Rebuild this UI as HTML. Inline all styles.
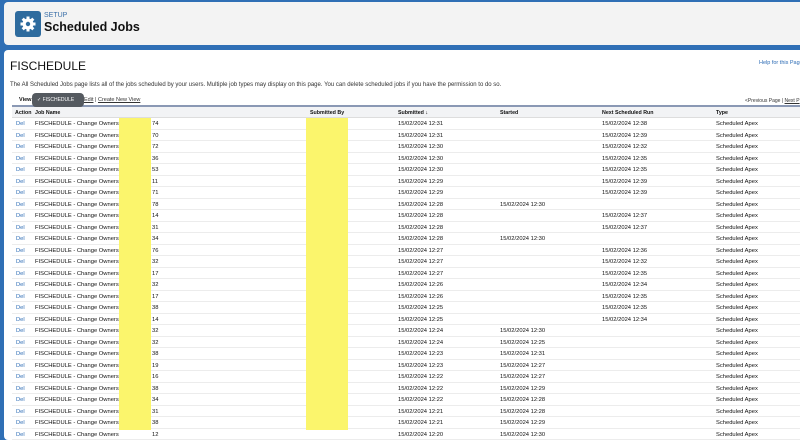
<!DOCTYPE html>
<html><head><meta charset="utf-8"><style>
*{margin:0;padding:0;box-sizing:border-box}
body{width:800px;height:430px;overflow:hidden;background:#2f6fb5;font-family:"Liberation Sans",Arial,sans-serif;position:relative}
.hdr{position:absolute;left:4px;top:2px;width:800px;height:43px;background:#f3f3f3;border-radius:4px}
.icon{position:absolute;left:11px;top:9px;width:26px;height:26px;background:#2e6b9e;border-radius:3px}
.setup{position:absolute;left:40px;top:10px;font-size:7px;color:#3a6fa8}
.title{position:absolute;left:40px;top:18px;font-size:12.5px;font-weight:bold;color:#111}
.card{position:absolute;left:4px;top:50px;width:800px;height:390px;background:#fff;border-radius:4px}
.t{position:absolute;white-space:nowrap;font-size:5.8px;color:#111}
.a{color:#2d6cb5}
.row{position:absolute;left:12px;width:790px;height:11.5px;border-bottom:1px solid #ececec}
.y{position:absolute;background:#fbf56c}
</style></head><body>
<div class="hdr">
<div class="icon"><svg width="26" height="26" viewBox="0 0 26 26"><g fill="#fff"><circle cx="13" cy="13" r="5.5"/><g stroke="#fff" stroke-width="3"><line x1="13" y1="5.5" x2="13" y2="20.5"/><line x1="5.5" y1="13" x2="20.5" y2="13"/><line x1="7.7" y1="7.7" x2="18.3" y2="18.3"/><line x1="18.3" y1="7.7" x2="7.7" y2="18.3"/></g></g><circle cx="13" cy="13" r="2.2" fill="#2e6b9e"/></svg></div>
<div class="setup">SETUP</div>
<div class="title">Scheduled Jobs</div>
</div>
<div class="card"></div>
<div class="t" style="left:10px;top:59px;font-size:12px">FISCHEDULE</div>
<div class="t a" style="left:759px;top:60px;font-size:5.5px">Help for this Page</div>
<div class="t" style="left:10px;top:82px;font-size:6px;color:#333">The All Scheduled Jobs page lists all of the jobs scheduled by your users. Multiple job types may display on this page. You can delete scheduled jobs if you have the permission to do so.</div>
<div class="t" style="left:19px;top:97px;font-size:5.5px;font-weight:bold">View:</div>
<div class="t" style="left:84px;top:97px;font-size:5.5px;color:#333"><u>Edit</u> | <u>Create New View</u></div>
<div class="t" style="left:745px;top:98px;font-size:5px;color:#333">&lt;Previous Page | <u>Next P</u></div>
<div style="position:absolute;left:12px;top:105px;width:800px;height:2px;background:#8a98b4"></div>
<div style="position:absolute;left:12px;top:107px;width:800px;height:11px;background:#f2f3f5;border-bottom:1px solid #ddd"></div>
<div class="t" style="left:15px;top:110px;font-size:5.3px;font-weight:bold">Action</div>
<div class="t" style="left:35px;top:110px;font-size:5.3px;font-weight:bold">Job Name</div>
<div class="t" style="left:310px;top:110px;font-size:5.3px;font-weight:bold">Submitted By</div>
<div class="t" style="left:398px;top:110px;font-size:5.3px;font-weight:bold">Submitted ↓</div>
<div class="t" style="left:500px;top:110px;font-size:5.3px;font-weight:bold">Started</div>
<div class="t" style="left:602px;top:110px;font-size:5.3px;font-weight:bold">Next Scheduled Run</div>
<div class="t" style="left:716px;top:110px;font-size:5.3px;font-weight:bold">Type</div>
<div id="rows"></div>
<div class="y" style="left:119px;top:118px;width:32px;height:312px"></div>
<div class="y" style="left:306px;top:118px;width:42px;height:312px"></div>
<div style="position:absolute;left:32px;top:93px;width:52px;height:14px;background:#555a60;border-radius:4px;color:#fff;font-size:5px;padding:4px 0 0 5px">✓ FISCHEDULE</div>
<script>
var d=[["74","12:31","","12:38"],["70","12:31","","12:39"],["72","12:30","","12:32"],["36","12:30","","12:35"],["53","12:30","","12:35"],["11","12:29","","12:39"],["71","12:29","","12:39"],["78","12:28","12:30",""],["14","12:28","","12:37"],["31","12:28","","12:37"],["34","12:28","12:30",""],["76","12:27","","12:36"],["32","12:27","","12:32"],["17","12:27","","12:35"],["32","12:26","","12:34"],["17","12:26","","12:35"],["38","12:25","","12:35"],["14","12:25","","12:34"],["32","12:24","12:30",""],["32","12:24","12:25",""],["38","12:23","12:31",""],["19","12:23","12:27",""],["16","12:22","12:27",""],["38","12:22","12:29",""],["34","12:22","12:28",""],["31","12:21","12:28",""],["38","12:21","12:29",""],["12","12:20","12:30",""]];
var h="",D="15/02/2024 ";
d.forEach(function(r,i){var y=118+i*11.5,ty=y+3;
h+='<div class="row" style="top:'+y+'px"></div>';
h+='<div class="t a" style="left:16px;top:'+ty+'px">Del</div>';
h+='<div class="t" style="left:35px;top:'+ty+'px">FISCHEDULE - Change Owners</div>';
h+='<div class="t" style="left:152px;top:'+ty+'px">'+r[0]+'</div>';
h+='<div class="t" style="left:398px;top:'+ty+'px">'+D+r[1]+'</div>';
if(r[2])h+='<div class="t" style="left:500px;top:'+ty+'px">'+D+r[2]+'</div>';
if(r[3])h+='<div class="t" style="left:602px;top:'+ty+'px">'+D+r[3]+'</div>';
h+='<div class="t" style="left:716px;top:'+ty+'px">Scheduled Apex</div>';});
document.getElementById("rows").innerHTML=h;
</script>
</body></html>
